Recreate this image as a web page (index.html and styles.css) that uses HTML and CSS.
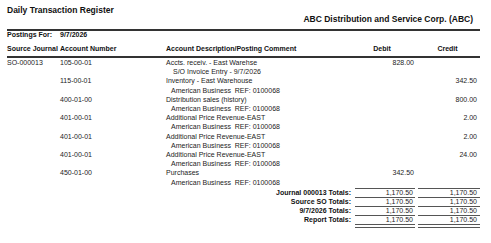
FILE: index.html
```html
<!DOCTYPE html>
<html>
<head>
<meta charset="utf-8">
<link rel="stylesheet" href="styles.css">
</head>
<body>
<div class="page">
  <header class="head">
    <div class="title">Daily Transaction Register</div>
    <div class="company">ABC Distribution and Service Corp. (ABC)</div>
  </header>
  <div class="grid postings">
    <div>Postings For:</div><div>9/7/2026</div>
  </div>
  <div class="grid colhead">
    <div>Source Journal</div><div>Account Number</div><div>Account Description/Posting Comment</div><div class="hc">Debit</div><div class="hc cr">Credit</div>
  </div>
  <div class="entries">
    <div class="grid entry">
      <div>SO-000013</div><div>105-00-01</div><div>Accts. receiv. - East Warehse</div><div class="num">828.00</div><div class="num cr"></div>
      <div></div><div></div><div class="cmt cmt-so">S/O Invoice Entry - 9/7/2026</div><div></div><div></div>
    </div>
    <div class="grid entry">
      <div></div><div>115-00-01</div><div>Inventory - East Warehouse</div><div class="num"></div><div class="num cr">342.50</div>
      <div></div><div></div><div class="cmt">American Business  REF: 0100068</div><div></div><div></div>
    </div>
    <div class="grid entry">
      <div></div><div>400-01-00</div><div>Distribution sales (history)</div><div class="num"></div><div class="num cr">800.00</div>
      <div></div><div></div><div class="cmt">American Business  REF: 0100068</div><div></div><div></div>
    </div>
    <div class="grid entry">
      <div></div><div>401-00-01</div><div>Additional Price Revenue-EAST</div><div class="num"></div><div class="num cr">2.00</div>
      <div></div><div></div><div class="cmt">American Business  REF: 0100068</div><div></div><div></div>
    </div>
    <div class="grid entry">
      <div></div><div>401-00-01</div><div>Additional Price Revenue-EAST</div><div class="num"></div><div class="num cr">2.00</div>
      <div></div><div></div><div class="cmt">American Business  REF: 0100068</div><div></div><div></div>
    </div>
    <div class="grid entry">
      <div></div><div>401-00-01</div><div>Additional Price Revenue-EAST</div><div class="num"></div><div class="num cr">24.00</div>
      <div></div><div></div><div class="cmt">American Business  REF: 0100068</div><div></div><div></div>
    </div>
    <div class="grid entry">
      <div></div><div>450-01-00</div><div>Purchases</div><div class="num">342.50</div><div class="num cr"></div>
      <div></div><div></div><div class="cmt">American Business  REF: 0100068</div><div></div><div></div>
    </div>
  </div>
  <div class="totals">
    <div class="trow"><div class="tlabel">Journal 000013 Totals:</div><div class="tcell">1,170.50</div><div class="tcell cr">1,170.50</div></div>
    <div class="trow"><div class="tlabel">Source SO Totals:</div><div class="tcell">1,170.50</div><div class="tcell cr">1,170.50</div></div>
    <div class="trow"><div class="tlabel">9/7/2026 Totals:</div><div class="tcell">1,170.50</div><div class="tcell cr">1,170.50</div></div>
    <div class="trow last"><div class="tlabel">Report Totals:</div><div class="tcell">1,170.50</div><div class="tcell cr">1,170.50</div></div>
  </div>
</div>
</body>
</html>
```
FILE: styles.css
```css
html, body {
  margin: 0;
  padding: 0;
  background: #ffffff;
}
.page {
  width: 473px;
  padding: 5px 0 0 7px;
  font-family: "Liberation Sans", Arial, sans-serif;
  color: #1c1c1c;
}
.head {
  padding-bottom: 5px;
  border-bottom: 2px solid #333333;
}
.title {
  font-size: 8.5px;
  font-weight: bold;
  line-height: 10px;
  color: #111111;
}
.company {
  font-size: 8.5px;
  font-weight: bold;
  line-height: 10px;
  margin-top: -1px;
  text-align: right;
  padding-right: 7px;
  color: #111111;
}
.grid {
  display: grid;
  grid-template-columns: 53px 106px 189px 60px 65px;
}
.postings {
  font-size: 7px;
  font-weight: bold;
  line-height: 7px;
  color: #111111;
}
.colhead {
  margin-top: 7px;
  font-size: 7px;
  font-weight: bold;
  line-height: 8px;
  padding-bottom: 3px;
  border-bottom: 2px solid #333333;
  color: #111111;
}
.hc {
  text-align: center;
  padding-right: 6px;
}
.hc.cr {
  padding-left: 3px;
  padding-right: 3px;
}
.entry {
  font-size: 7px;
  line-height: 9.2px;
}
.num {
  text-align: right;
  padding-right: 1px;
}
.num.cr {
  padding-right: 3px;
}
.cmt {
  padding-left: 5px;
  white-space: pre;
}
.cmt-so {
  padding-left: 7px;
}
.totals {
  margin-top: 1.5px;
  font-size: 7px;
  line-height: 8px;
}
.trow {
  display: grid;
  grid-template-columns: 345px 60px 62px;
  column-gap: 3px;
}
.tlabel {
  font-weight: bold;
  text-align: right;
  padding-right: 1px;
  padding-top: 1px;
  color: #111111;
}
.tcell {
  text-align: right;
  padding-right: 2px;
  border-top: 1px solid #555555;
}
.tcell.cr {
  padding-right: 3px;
}
.trow.last .tcell {
  border-bottom: 4px double #555555;
}
```
